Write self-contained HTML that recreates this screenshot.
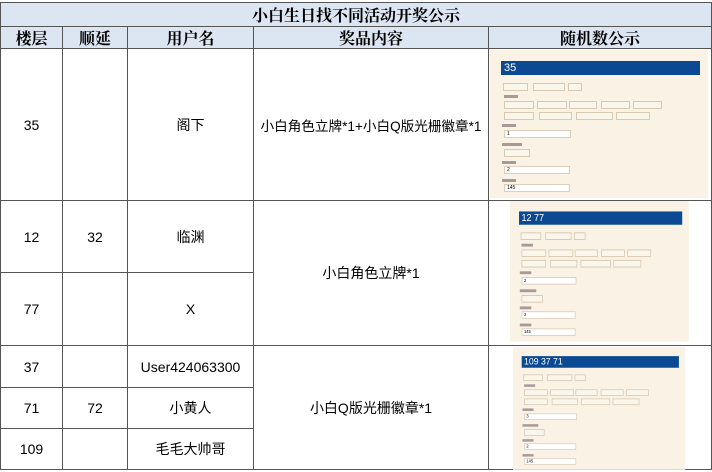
<!DOCTYPE html>
<html><head><meta charset="utf-8"><style>
body{margin:0;width:712px;height:472px;background:#fff;position:relative;overflow:hidden;font-family:"Liberation Sans","Noto Sans CJK SC",sans-serif;}
.c{position:absolute;border:1px solid #555;box-sizing:border-box;display:flex;align-items:center;justify-content:center;font-size:14px;color:#000;white-space:nowrap;}
.h{background:#dce6f2;font-family:"Noto Serif CJK SC",serif;font-weight:bold;font-size:16px;}
.img{position:absolute;width:218px;height:148px;background:#faf2e4;transform-origin:0 0;}
.img div{position:absolute;box-sizing:border-box;}
.bar{left:11px;top:11px;width:199px;height:14px;background:#0b4a92;color:#fff;font-size:11px;line-height:14px;padding-left:3px;}
.b{height:8px;border:1px solid #d8c9b2;background:#fbf6ec;}
.i{height:8px;border:1px solid #ddd0bb;background:#fff;font-size:5px;line-height:6px;padding-left:2px;}
.l{width:14px;height:3px;background:#a99;}
</style></head><body>
<div class="c h" style="left:0;top:2px;width:712px;height:25px;">小白生日找不同活动开奖公示</div>
<div class="c h" style="left:0;top:26px;width:63px;height:23px;">楼层</div>
<div class="c h" style="left:62px;top:26px;width:66px;height:23px;">顺延</div>
<div class="c h" style="left:127px;top:26px;width:127px;height:23px;">用户名</div>
<div class="c h" style="left:253px;top:26px;width:236px;height:23px;">奖品内容</div>
<div class="c h" style="left:488px;top:26px;width:224px;height:23px;">随机数公示</div>

<div class="c" style="left:0;top:48px;width:63px;height:153px;">35</div>
<div class="c" style="left:62px;top:48px;width:66px;height:153px;"></div>
<div class="c" style="left:127px;top:48px;width:127px;height:153px;">阁下</div>
<div class="c" style="left:253px;top:48px;width:236px;height:153px;font-size:13.6px;">小白角色立牌*1+小白Q版光栅徽章*1</div>
<div class="c" style="left:488px;top:48px;width:224px;height:153px;"></div>

<div class="c" style="left:0;top:200px;width:63px;height:73px;">12</div>
<div class="c" style="left:0;top:272px;width:63px;height:74px;">77</div>
<div class="c" style="left:62px;top:200px;width:66px;height:73px;">32</div>
<div class="c" style="left:62px;top:272px;width:66px;height:74px;"></div>
<div class="c" style="left:127px;top:200px;width:127px;height:73px;">临渊</div>
<div class="c" style="left:127px;top:272px;width:127px;height:74px;">X</div>
<div class="c" style="left:253px;top:200px;width:236px;height:146px;">小白角色立牌*1</div>
<div class="c" style="left:488px;top:200px;width:224px;height:146px;"></div>

<div class="c" style="left:0;top:345px;width:63px;height:43px;">37</div>
<div class="c" style="left:0;top:387px;width:63px;height:42px;">71</div>
<div class="c" style="left:0;top:428px;width:63px;height:42px;">109</div>
<div class="c" style="left:62px;top:345px;width:66px;height:43px;"></div>
<div class="c" style="left:62px;top:387px;width:66px;height:42px;">72</div>
<div class="c" style="left:62px;top:428px;width:66px;height:42px;"></div>
<div class="c" style="left:127px;top:345px;width:127px;height:43px;">User424063300</div>
<div class="c" style="left:127px;top:387px;width:127px;height:42px;">小黄人</div>
<div class="c" style="left:127px;top:428px;width:127px;height:42px;">毛毛大帅哥</div>
<div class="c" style="left:253px;top:345px;width:236px;height:125px;">小白Q版光栅徽章*1</div>
<div class="c" style="left:488px;top:345px;width:224px;height:125px;"></div>

<div class="img" style="left:490px;top:50px;transform:scale(1,1);">
<div class="bar">35</div>
<div class="b" style="left:13px;top:33px;width:25px"></div><div class="b" style="left:43px;top:33px;width:32px"></div><div class="b" style="left:78px;top:33px;width:14px"></div>
<div class="l" style="left:14px;top:45px"></div>
<div class="b" style="left:14px;top:51px;width:30px"></div><div class="b" style="left:47px;top:51px;width:30px"></div><div class="b" style="left:79px;top:51px;width:28px"></div><div class="b" style="left:111px;top:51px;width:29px"></div><div class="b" style="left:143px;top:51px;width:29px"></div>
<div class="b" style="left:14px;top:62px;width:30px"></div><div class="b" style="left:49px;top:62px;width:33px"></div><div class="b" style="left:86px;top:62px;width:37px"></div><div class="b" style="left:126px;top:62px;width:34px"></div>
<div class="l" style="left:12px;top:74px"></div><div class="i" style="left:14px;top:80px;width:67px">1</div>
<div class="l" style="left:12px;top:93px;width:20px"></div><div class="b" style="left:14px;top:99px;width:26px"></div>
<div class="l" style="left:12px;top:111px"></div><div class="i" style="left:14px;top:116px;width:66px">2</div>
<div class="l" style="left:12px;top:129px"></div><div class="i" style="left:14px;top:134px;width:66px">145</div>
</div>
<div class="img" style="left:510px;top:201px;transform:scale(0.82,0.95);">
<div class="bar">12 77</div>
<div class="b" style="left:13px;top:33px;width:25px"></div><div class="b" style="left:43px;top:33px;width:32px"></div><div class="b" style="left:78px;top:33px;width:14px"></div>
<div class="l" style="left:14px;top:45px"></div>
<div class="b" style="left:14px;top:51px;width:30px"></div><div class="b" style="left:47px;top:51px;width:30px"></div><div class="b" style="left:79px;top:51px;width:28px"></div><div class="b" style="left:111px;top:51px;width:29px"></div><div class="b" style="left:143px;top:51px;width:29px"></div>
<div class="b" style="left:14px;top:62px;width:30px"></div><div class="b" style="left:49px;top:62px;width:33px"></div><div class="b" style="left:86px;top:62px;width:37px"></div><div class="b" style="left:126px;top:62px;width:34px"></div>
<div class="l" style="left:12px;top:74px"></div><div class="i" style="left:14px;top:80px;width:67px">2</div>
<div class="l" style="left:12px;top:93px;width:20px"></div><div class="b" style="left:14px;top:99px;width:26px"></div>
<div class="l" style="left:12px;top:111px"></div><div class="i" style="left:14px;top:116px;width:66px">2</div>
<div class="l" style="left:12px;top:129px"></div><div class="i" style="left:14px;top:134px;width:66px">145</div>
</div>
<div class="img" style="left:513px;top:347px;transform:scale(0.79,0.83);">
<div class="bar">109 37 71</div>
<div class="b" style="left:13px;top:33px;width:25px"></div><div class="b" style="left:43px;top:33px;width:32px"></div><div class="b" style="left:78px;top:33px;width:14px"></div>
<div class="l" style="left:14px;top:45px"></div>
<div class="b" style="left:14px;top:51px;width:30px"></div><div class="b" style="left:47px;top:51px;width:30px"></div><div class="b" style="left:79px;top:51px;width:28px"></div><div class="b" style="left:111px;top:51px;width:29px"></div><div class="b" style="left:143px;top:51px;width:29px"></div>
<div class="b" style="left:14px;top:62px;width:30px"></div><div class="b" style="left:49px;top:62px;width:33px"></div><div class="b" style="left:86px;top:62px;width:37px"></div><div class="b" style="left:126px;top:62px;width:34px"></div>
<div class="l" style="left:12px;top:74px"></div><div class="i" style="left:14px;top:80px;width:67px">3</div>
<div class="l" style="left:12px;top:93px;width:20px"></div><div class="b" style="left:14px;top:99px;width:26px"></div>
<div class="l" style="left:12px;top:111px"></div><div class="i" style="left:14px;top:116px;width:66px">2</div>
<div class="l" style="left:12px;top:129px"></div><div class="i" style="left:14px;top:134px;width:66px">145</div>
</div>
</body></html>
